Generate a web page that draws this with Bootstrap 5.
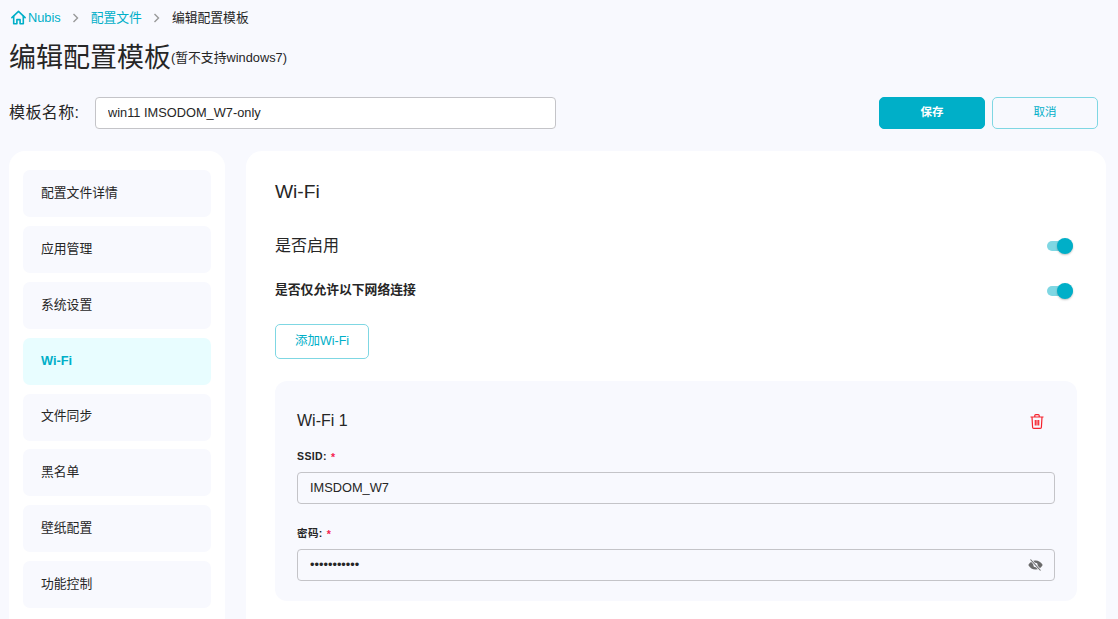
<!DOCTYPE html>
<html lang="zh">
<head>
<meta charset="utf-8">
<title>编辑配置模板</title>
<link href="https://cdn.jsdelivr.net/npm/bootstrap@5.3.0/dist/css/bootstrap.min.css" rel="stylesheet">
<style>
html,body{height:619px;overflow:hidden}
body{background:#f8f9fe;color:#262626;font-family:"Liberation Sans","Noto Sans CJK SC",sans-serif;font-size:12.8px}
.page-wrap{padding:0 12px 0 9px}
.crumbs{height:35px;font-size:12.8px}
.crumbs a{color:#00afc8;text-decoration:none}
.crumb-sep{margin:0 11.5px;display:flex}
.home-link{margin-left:2px;gap:2px}
.page-head{height:44px;padding-top:1px}
.page-head h1{font-size:27px;font-weight:400;margin:0;line-height:44px}
.page-head span{font-size:12.8px;line-height:1;margin-top:1px}
.name-row{margin-top:18px;height:32px;padding-right:8px}
.name-label{font-size:16px;width:86px;flex:none;letter-spacing:.4px}
.name-input,.field-input{height:32px;border:1px solid #c4c4c8;border-radius:4px;font-size:12.8px;color:#262626;padding:0 12px 2px;box-shadow:none}
.name-input{width:461px;flex:none;background:#fff}
.field-input{background:#f8f9fe}
.act-row{gap:7px}
.act-btn{width:106px;height:32px;font-size:11.5px;font-weight:700;border-radius:5px;padding:0;flex:none}
.btn-fill{background:#00afc8;border:1px solid #00afc8;color:#fff}
.btn-line{background:transparent;border:1px solid #7fd7e3;color:#00afc8;font-weight:400}
.cols{margin-top:22px;gap:21px}
.side-panel{width:216px;flex:none;background:#fff;border-radius:16px;padding:19px 14px;height:520px}
.side-item{height:47px;background:#f8f9fe;border-radius:7px;padding:0 18px 2px;display:flex;align-items:center;margin-bottom:8.9px;font-size:12.8px;color:#262626}
.side-item.on{background:#e8fdff;color:#00afc8;font-weight:700}
.main-panel{flex:1;background:#fff;border-radius:16px;padding:29px 29px 0;height:520px}
.main-title{font-size:19.2px;font-weight:400;line-height:24px;margin:0}
.sw-row{height:44px}
.sw-row.first{margin-top:19px;height:45px;font-size:16px}
.sw-row.second{margin-top:1px;font-weight:700;font-size:12.8px}
.sw-row.second .sw-text{margin-top:-2px}
.sw{width:26px;height:16px;position:relative;flex:none}
.sw::before{content:"";position:absolute;left:0;top:3px;width:26px;height:10px;border-radius:5px;background:#7fd7e3}
.sw::after{content:"";position:absolute;right:0;top:0;width:16px;height:16px;border-radius:50%;background:#00afc8;box-shadow:0 1px 2px rgba(0,0,0,.25)}
.add-btn{width:94px;height:35px;font-size:12.5px;border-radius:5px;padding:0;margin-top:11px;display:block}
.wifi-box{background:#f8f9fe;border-radius:12px;margin-top:22px;padding:27px 22px 20px;height:220px}
.wifi-head{height:26px;padding-right:11px}
.wifi-head h2{font-size:16px;font-weight:400;margin:0;color:#262626}
.fld-label{font-size:10.5px;font-weight:700;line-height:14px;margin:0 0 9px;letter-spacing:.4px;display:block}
.req{color:#f5224f;margin-left:4px;vertical-align:-1px;line-height:0}
.fld-one{margin-top:15px}
.fld-two{margin-top:22px}
.pw-wrap{position:relative}
.pw-eye{position:absolute;right:12px;top:9px;display:block}
</style>
</head>
<body>
<div class="page-wrap">
  <div class="crumbs d-flex align-items-center">
    <a href="#" class="home-link d-flex align-items-center">
      <svg width="15" height="15" viewBox="0 0 15 15" fill="none" stroke="#00afc8" stroke-width="1.6" stroke-linejoin="round" stroke-linecap="round"><path d="M.9 7.600 7.500 1.300l6.600 6.300"/><path d="M2.700 6.200v7.600h3.200V9.600h3.200v4.200h3.200V6.200"/></svg>
      <span>Nubis</span>
    </a>
    <span class="crumb-sep"><svg width="7" height="10" viewBox="0 0 7 10" fill="none" stroke="#999" stroke-width="1.4"><path d="m1.500 1 4 4-4 4"/></svg></span>
    <a href="#">配置文件</a>
    <span class="crumb-sep"><svg width="7" height="10" viewBox="0 0 7 10" fill="none" stroke="#999" stroke-width="1.4"><path d="m1.500 1 4 4-4 4"/></svg></span>
    <span>编辑配置模板</span>
  </div>
  <div class="page-head d-flex align-items-center">
    <h1>编辑配置模板</h1><span>(暂不支持windows7)</span>
  </div>
  <div class="name-row d-flex align-items-center">
    <label class="name-label">模板名称:</label>
    <input class="form-control name-input" value="win11 IMSODOM_W7-only">
    <div class="act-row ms-auto d-flex">
      <button class="btn act-btn btn-fill">保存</button>
      <button class="btn act-btn btn-line">取消</button>
    </div>
  </div>
  <div class="cols d-flex">
    <nav class="side-panel">
      <div class="side-item">配置文件详情</div>
      <div class="side-item">应用管理</div>
      <div class="side-item">系统设置</div>
      <div class="side-item on">Wi-Fi</div>
      <div class="side-item">文件同步</div>
      <div class="side-item">黑名单</div>
      <div class="side-item">壁纸配置</div>
      <div class="side-item">功能控制</div>
    </nav>
    <main class="main-panel">
      <h2 class="main-title">Wi-Fi</h2>
      <div class="sw-row first d-flex align-items-center justify-content-between pe-1"><span>是否启用</span><span class="sw"></span></div>
      <div class="sw-row second d-flex align-items-center justify-content-between pe-1"><span class="sw-text">是否仅允许以下网络连接</span><span class="sw"></span></div>
      <button class="btn add-btn btn-line">添加Wi-Fi</button>
      <section class="wifi-box">
        <div class="wifi-head d-flex align-items-center justify-content-between">
          <h2>Wi-Fi 1</h2>
          <svg width="14" height="15" viewBox="0 0 14 15" fill="none" stroke="#f5222d" stroke-width="1.2"><path d="M.5 3h13M4.800 3V1.600q0-1 1-1h2.400q1 0 1 1V3M2 3l.6 10.200q0 1.200 1.200 1.200h6.400q1.200 0 1.200-1.200L12 3M5.300 6v5.500M7 6v5.500M8.700 6v5.500"/></svg>
        </div>
        <div class="fld-one">
          <label class="fld-label">SSID:<span class="req">*</span></label>
          <input class="form-control field-input" value="IMSDOM_W7">
        </div>
        <div class="fld-two">
          <label class="fld-label">密码:<span class="req">*</span></label>
          <div class="pw-wrap">
            <input class="form-control field-input" type="password" value="12345678901">
            <svg class="pw-eye" width="15" height="14" viewBox="0 0 15 14"><path fill="#6b6b6b" d="M.3 7C2 3.900 4.500 2.400 7.500 2.400S13 3.900 14.700 7c-1.700 3.100-4.200 4.600-7.200 4.600S2 10.100.3 7Z"/><circle cx="7.500" cy="7" r="2.200" fill="#f8f9fe"/><path d="M2.500 1.500 12.500 12.500" stroke="#f8f9fe" stroke-width="2.400"/><path d="M2.500 1.500 12.500 12.500" stroke="#6b6b6b" stroke-width="1.100"/></svg>
          </div>
        </div>
      </section>
    </main>
  </div>
</div>
<script src="https://cdn.jsdelivr.net/npm/bootstrap@5.3.0/dist/js/bootstrap.bundle.min.js"></script>
</body>
</html>
